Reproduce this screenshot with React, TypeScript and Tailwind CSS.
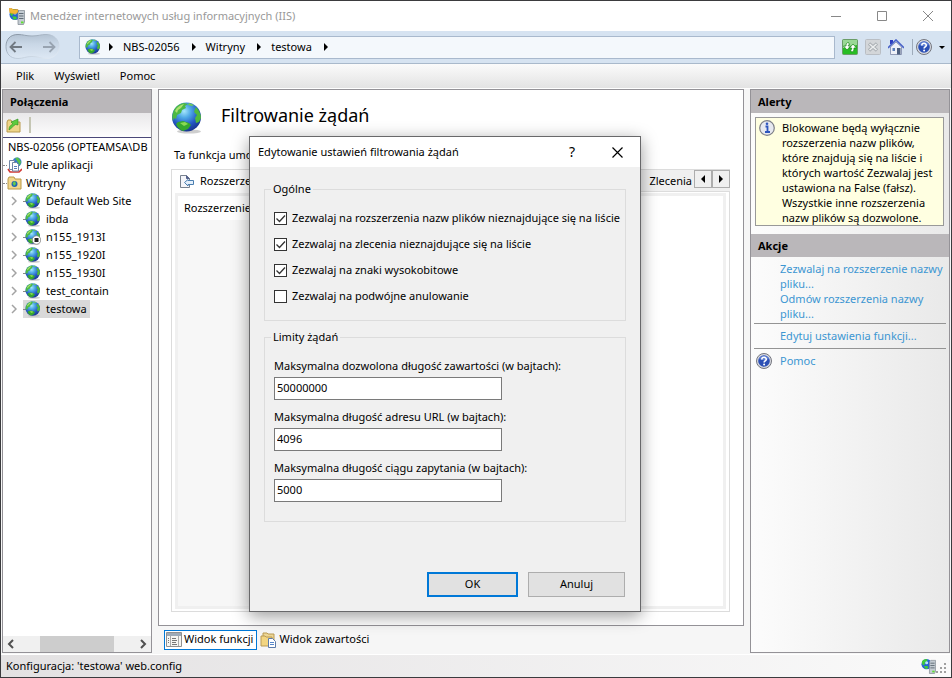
import React from 'react'

const sites = [
  { name: 'Default Web Site' },
  { name: 'ibda' },
  { name: 'n155_1913I', stopped: true },
  { name: 'n155_1920I' },
  { name: 'n155_1930I' },
  { name: 'test_contain' },
  { name: 'testowa', selected: true },
]

const options = [
  { id: 'ext', label: 'Zezwalaj na rozszerzenia nazw plików nieznajdujące się na liście', checked: true },
  { id: 'verbs', label: 'Zezwalaj na zlecenia nieznajdujące się na liście', checked: true },
  { id: 'highbit', label: 'Zezwalaj na znaki wysokobitowe', checked: true },
  { id: 'escape', label: 'Zezwalaj na podwójne anulowanie', checked: false },
]

const limits = [
  { id: 'content', label: 'Maksymalna dozwolona długość zawartości (w bajtach):', value: '50000000' },
  { id: 'url', label: 'Maksymalna długość adresu URL (w bajtach):', value: '4096' },
  { id: 'query', label: 'Maksymalna długość ciągu zapytania (w bajtach):', value: '5000' },
]

function Globe({ className, stopped = false }: { className: string; stopped?: boolean }) {
  const id = React.useId()
  return (
    <svg viewBox="0 0 32 32" className={className} aria-hidden="true">
      <defs>
        <radialGradient id={id} cx="0.42" cy="0.3" r="0.75">
          <stop offset="0" stopColor="#a6e6fb" />
          <stop offset="0.3" stopColor="#4fa9e6" />
          <stop offset="0.65" stopColor="#2558c4" />
          <stop offset="1" stopColor="#172f86" />
        </radialGradient>
      </defs>
      <ellipse cx="18" cy="29.5" rx="12" ry="2" fill="#b9b9b9" opacity="0.7" />
      <circle cx="15.5" cy="15" r="14.5" fill={`url(#${id})`} />
      <path d="M2 11C3 6 7 2 13 1l4 1-3 2 1 2-4 2-1 3-4 2-1 4-2-1-1 3c-1-2-1-6 0-8z" fill="#4cb944" />
      <path d="M4 9c2-4 5-6 9-7l-3 4-3 2-1 3z" fill="#c5ea7c" opacity="0.8" />
      <path d="M7 20l5-1 6 2 2 2-3 4-5 2c-3-1-6-4-7-7z" fill="#36a82d" />
      <path d="M9 21l5-1 3 2-4 2z" fill="#8bd952" />
      <path d="M25 5c3 3 5 7 5 11l-2 4-3 1-1-5 2-3-3-3 1-3z" fill="#4fb93c" />
      <path d="M18 1l5 2-2 1-4-1z" fill="#6fcb58" />
      {stopped && (
        <>
          <circle cx="23" cy="22" r="8.5" fill="#fff" stroke="#777" strokeWidth="1.5" />
          <rect x="19" y="18" width="8" height="8" fill="#222" />
        </>
      )}
    </svg>
  )
}

function ServerIcon({ className, folder = false }: { className: string; folder?: boolean }) {
  return (
    <svg viewBox="0 0 16 17" className={className} aria-hidden="true">
      <circle cx="6" cy="6.500" r="5.500" fill="#2462d6" />
      <path d="M1 5c0-3 3-4 5-4l1 2-3 2v2l-2 1zM3 8.500l4 0 1 2-3 1.500z" fill="#3fcb3a" />
      <circle cx="6" cy="5" r="1.600" fill="#b5e8fb" />
      {folder && <path d="M0 .5h3l1 1h5v3L6 6 1 5z" fill="#f5b832" stroke="#d08d14" strokeWidth="0.5" />}
      <path d="M9 4l1.500-1.500h5V14L14.500 16.500H9z" fill="#c3cbd2" stroke="#7b858e" strokeWidth="0.7" />
      <path d="M10 5.500h4.500M10 8h4.500M10 10.500h4.500" stroke="#55626c" strokeWidth="0.9" />
      <rect x="12" y="13.500" width="2.500" height="1.800" fill="#5ee02f" />
    </svg>
  )
}

function HelpIcon({ className }: { className: string }) {
  return (
    <svg viewBox="0 0 16 16" className={className} aria-hidden="true">
      <circle cx="8" cy="8" r="7.500" fill="#d9dbe2" stroke="#74767e" />
      <circle cx="8" cy="8" r="5.800" fill="#2c50b5" />
      <path d="M3 6a5.500 5.500 0 0 1 10 0c-3 1.500-7 1.500-10 0z" fill="#6f90df" opacity="0.7" />
      <path d="M5.800 6.400C5.800 3.600 10.300 3.700 10.300 6.200c0 1.700-2.200 1.600-2.200 3.300" fill="none" stroke="#fff" strokeWidth="1.600" />
      <circle cx="8.100" cy="11.600" r="1" fill="#fff" />
    </svg>
  )
}

function Triangle({ dir = 'right' }: { dir?: 'right' | 'left' | 'down' }) {
  const d = { right: 'M2 0l4 4-4 4z', left: 'M6 0L2 4l4 4z', down: 'M1 3h6L4 6z' }[dir]
  return (
    <svg viewBox="0 0 8 8" className="size-2" aria-hidden="true">
      <path d={d} fill="#000" />
    </svg>
  )
}

function TitleBar() {
  return (
    <header className="flex h-[30px] shrink-0 items-center bg-white pl-2 text-[#999]">
      <ServerIcon className="h-[17px] w-4" folder />
      <h1 className="ml-[5px] flex-1">Menedżer internetowych usług informacyjnych (IIS)</h1>
      <div className="flex">
        <button aria-label="Minimalizuj" className="flex h-[30px] w-[46px] items-center justify-center">
          <svg viewBox="0 0 10 10" className="size-2.5"><path d="M0 5.500h10" stroke="#888" /></svg>
        </button>
        <button aria-label="Maksymalizuj" className="flex h-[30px] w-[46px] items-center justify-center">
          <svg viewBox="0 0 10 10" className="size-2.5"><path d="M.5.5h9v9h-9z" fill="none" stroke="#888" /></svg>
        </button>
        <button aria-label="Zamknij" className="flex h-[30px] w-[46px] items-center justify-center">
          <svg viewBox="0 0 10 10" className="size-2.5"><path d="M0 0l10 10M10 0L0 10" stroke="#888" /></svg>
        </button>
      </div>
    </header>
  )
}

function AddressBar() {
  return (
    <nav className="flex h-[33px] shrink-0 items-center border-b border-[#a9b9cb] bg-[#d6e3f1] pl-1">
      <div className="relative flex h-7 w-[55px] items-center justify-between px-1">
        <svg viewBox="0 0 55 28" className="absolute inset-0 h-7 w-[55px]" aria-hidden="true">
          <defs>
            <linearGradient id="pill" x1="0" y1="0" x2="0" y2="1">
              <stop offset="0" stopColor="#b4c3d3" />
              <stop offset="0.4" stopColor="#c9d7e6" />
              <stop offset="1" stopColor="#dde8f4" />
            </linearGradient>
            <linearGradient id="pillEdge" x1="0" y1="0" x2="1" y2="1">
              <stop offset="0" stopColor="#7f8c9a" />
              <stop offset="0.5" stopColor="#b7c5d4" />
              <stop offset="1" stopColor="#e9f1f9" />
            </linearGradient>
          </defs>
          <path d="M13 1.500c5 0 8 1.500 14 1.500s9-1.500 14-1.500c8 0 13 5 13 12s-5 12-13 12c-5 0-8-2-14-2s-9 2-14 2c-8 0-12-5-12-12s4-12 12-12z" fill="url(#pill)" stroke="url(#pillEdge)" />
        </svg>
        <button aria-label="Wstecz" className="relative">
          <svg viewBox="0 0 13 12" className="h-3 w-[13px]"><path d="M13 6H2M6.500 1l-5 5 5 5" fill="none" stroke="#717982" strokeWidth="1.800" /></svg>
        </button>
        <button aria-label="Dalej" className="relative">
          <svg viewBox="0 0 13 12" className="h-3 w-[13px]"><path d="M0 6h11M6.500 1l5 5-5 5" fill="none" stroke="#98a3b0" strokeWidth="1.800" /></svg>
        </button>
      </div>
      <div className="ml-[19px] flex h-[23px] flex-1 items-center border border-[#a9b9cd] bg-[#f4f8fc] pl-[5px]">
        <Globe className="size-4" />
        <span className="ml-1.5"><Triangle /></span>
        {['NBS-02056', 'Witryny', 'testowa'].map((item) => (
          <React.Fragment key={item}>
            <a href="#" className="ml-2 mr-2.5">{item}</a>
            <Triangle />
          </React.Fragment>
        ))}
      </div>
      <div className="flex items-center pr-[5px] pl-[7px]">
        <button aria-label="Odśwież">
          <svg viewBox="0 0 16 16" className="size-4">
            <rect x=".5" y=".5" width="15" height="15" rx="1" fill="#27bd24" stroke="#6a9c68" />
            <path d="M1 1h14v5L1 9z" fill="#b6dfb2" opacity="0.800" />
            <path d="M6.500 3.500C4.500 3.500 4 5 4 7H1.500l3.500 4 3.500-4H6.300c0-1 .2-1.500 1.200-1.500zM9.500 13c2 0 2.500-1.500 2.500-4h2.500L11 5 7.500 9h2.200c0 1-.2 2-1.200 2z" fill="#fff" stroke="#168414" strokeWidth="0.700" />
          </svg>
        </button>
        <button aria-label="Zatrzymaj" className="ml-[7px]">
          <svg viewBox="0 0 16 16" className="size-4">
            <rect x=".5" y=".5" width="15" height="15" rx="1" fill="#d3d6d9" stroke="#b9bec4" />
            <path d="M4 4.500l8 7M12 4.500l-8 7" stroke="#a9aeb3" strokeWidth="3.400" />
            <path d="M4.500 5l7 6M11.500 5l-7 6" stroke="#eceeef" strokeWidth="1.600" />
          </svg>
        </button>
        <button aria-label="Strona główna" className="ml-[7px]">
          <svg viewBox="0 0 16 16" className="size-4">
            <path d="M2.500 8v7.500h11V8L8 3z" fill="#eef1f8" stroke="#7d88a8" strokeWidth="0.800" />
            <path d="M2 1h3v4H2z" fill="#2d3fc0" />
            <path d="M0 9l8-8 8 8" fill="none" stroke="#4a63c8" strokeWidth="1.600" />
            <rect x="4.500" y="9" width="2.500" height="3" fill="#5c7fb8" />
            <rect x="9" y="9" width="3.500" height="6.500" fill="#4d5f7f" />
          </svg>
        </button>
        <span className="ml-2 h-4 w-px bg-[#9eabba]" />
        <button aria-label="Pomoc" className="ml-[3px] flex items-center gap-1.5">
          <HelpIcon className="size-4" />
          <Triangle dir="down" />
        </button>
      </div>
    </nav>
  )
}

function Connections() {
  return (
    <aside className="flex w-[150px] shrink-0 flex-col border border-[#949297] bg-white">
      <h2 className="h-[23px] bg-[#bab7ba] pl-[7px] leading-[23px] font-bold">Połączenia</h2>
      <div className="flex h-[25px] items-center gap-2 border-b border-[#4a4878] bg-linear-to-b from-[#e9e8ea] to-[#fdfdfd] pl-[3px]">
        <button aria-label="Połącz">
          <svg viewBox="0 0 15 15" className="size-[15px]">
            <path d="M1 4l1-2h3l1 2h8v10H1z" fill="#eed589" stroke="#b99a4c" />
            <path d="M3 12c0-4 2-5 4-6L5 4l7-3v6L9.500 6.500C7 8 6 10 3 12z" fill="#5dcb3e" stroke="#2c8e1c" strokeWidth="0.600" />
          </svg>
        </button>
        <span className="h-4 w-0.5 bg-[#c5c6b4]" />
      </div>
      <ul className="flex-1 overflow-hidden whitespace-nowrap leading-[18px]">
        <li className="pl-[5px]">NBS-02056 (OPTEAMSA\DB</li>
        <li className="flex items-center">
          <span className="w-1 border-t border-dotted border-[#888]" />
          <svg viewBox="0 0 15 16" className="h-4 w-[15px]" aria-hidden="true">
            <circle cx="10" cy="5" r="4.500" fill="#3479cf" />
            <path d="M8 1l3-.5 3 4-1 4-2-3z" fill="#58c24a" />
            <path d="M1 12l2 3h9l3-3" fill="none" stroke="#d23a35" strokeWidth="1.600" />
            <path d="M2.500 3.500h5v9h-5z" fill="#fff" stroke="#7287a5" />
            <path d="M5.500 5.500h4l2 2v6.500h-6z" fill="#fff" stroke="#7287a5" />
            <path d="M7 9.500h3M7 11.500h3" stroke="#5b80bb" />
          </svg>
          <span className="ml-1">Pule aplikacji</span>
        </li>
        <li className="flex items-center">
          <span className="w-1 border-t border-dotted border-[#888]" />
          <svg viewBox="0 0 15 14" className="h-3.5 w-[15px]" aria-hidden="true">
            <path d="M1 3l1-2h5l1 2h6v10H1z" fill="#f1d68b" stroke="#b89848" />
            <circle cx="7.500" cy="8" r="3" fill="#1f67b5" />
            <path d="M5.500 7l2.500-2 1 3-2 2z" fill="#67cb4b" />
          </svg>
          <span className="ml-1">Witryny</span>
        </li>
        {sites.map((site) => (
          <li key={site.name} className="flex items-center pl-2">
            <svg viewBox="0 0 6 10" className="h-2.5 w-1.5" aria-hidden="true"><path d="M1 1l4 4-4 4" fill="none" stroke="#a3a3a3" strokeWidth="1.500" /></svg>
            <span className={`ml-1.5 flex items-center pr-[3px] ${site.selected ? 'bg-[#d9d9d9]' : ''}`}>
              <span className="w-0.5 border-t border-dotted border-[#888]" />
              <Globe className="size-4" stopped={site.stopped} />
              <a href="#" className="ml-[5px]">{site.name}</a>
            </span>
          </li>
        ))}
      </ul>
      <div className="flex h-4 items-center justify-between bg-[#f0f0f0] px-1">
        <button aria-label="Przewiń w lewo"><svg viewBox="0 0 7 10" className="h-2.5 w-[7px]"><path d="M6 1L2 5l4 4" fill="none" stroke="#505050" strokeWidth="2" /></svg></button>
        <div className="h-4 w-[74px] bg-[#cdcdcd]" />
        <button aria-label="Przewiń w prawo"><svg viewBox="0 0 7 10" className="h-2.5 w-[7px]"><path d="M1 1l4 4-4 4" fill="none" stroke="#505050" strokeWidth="2" /></svg></button>
      </div>
    </aside>
  )
}

function Workspace() {
  return (
    <div className="flex min-w-0 flex-1 flex-col">
      <main className="flex flex-1 flex-col border border-[#949297] bg-white pt-3 pr-[13px] pb-[13px] pl-3">
        <div className="flex items-center gap-[18px]">
          <Globe className="size-8" />
          <h2 className="pb-1.5 text-lg leading-[26px]">Filtrowanie żądań</h2>
        </div>
        <p className="mt-3 pl-[3px] leading-[18px]">Ta funkcja umo</p>
        <div className="mt-[5px] flex h-[23px] items-start whitespace-nowrap">
          <button className="flex h-[23px] items-center gap-1.5 border-t border-l border-[#dcdcdc] pr-2 pl-2">
            <svg viewBox="0 0 14 13" className="h-[13px] w-3.5" aria-hidden="true">
              <path d="M.5.5h6l3 3v9h-9z" fill="#f4f5f9" stroke="#77818f" />
              <path d="M6.500.5v3h3" fill="#53608a" stroke="#53608a" />
              <path d="M13.500 5.500v4H8V11L4.500 7.500 8 4.500v1z" fill="#e4effb" stroke="#4b7fb0" />
            </svg>
            Rozszerze
          </button>
          <div className="flex h-[23px] flex-1 items-start justify-end border-t border-b border-[#dcdcdc] bg-[#f0f0f0]">
            <button className="h-[22px] pr-0.5 leading-[22px]">Zlecenia</button>
            <button aria-label="Poprzednia karta" className="flex h-[18px] w-[18px] items-center justify-center border border-[#adadad] bg-[#f0f0f0]"><Triangle dir="left" /></button>
            <button aria-label="Następna karta" className="flex h-[18px] w-[18px] items-center justify-center border border-[#adadad] bg-[#f0f0f0]"><Triangle /></button>
          </div>
        </div>
        <div className="flex flex-1 border-x border-b border-[#dcdcdc] px-[3px] pt-px pb-0.5">
          <div className="flex flex-1 border-[3px] border-[#f0f0f0]">
            {/* sorted column is shaded below its header */}
            <table className="h-full w-1/4 border-collapse text-left">
              <thead>
                <tr><th className="h-6 px-1.5 font-normal">Rozszerzenie</th></tr>
              </thead>
              <tbody>
                <tr><td className="bg-[#f7f7f7]" /></tr>
              </tbody>
            </table>
          </div>
        </div>
      </main>
      <div className="flex h-[27px] items-center gap-[3px] pl-1.5">
        <button className="flex h-5 items-center gap-0.5 border border-[#0078d7] bg-white pr-[3px] pl-px">
          <svg viewBox="0 0 16 15" className="h-[15px] w-4" aria-hidden="true">
            <path d="M.5.5h15v14H.5z" fill="#f5f5f2" stroke="#909090" />
            <path d="M1 1h14v3H1z" fill="#9eabb8" />
            <path d="M4.500 4v10M12.500 4v10" stroke="#aaa" />
            <path d="M2 6.500h1M2 8.500h1M2 10.500h1M6 6.500h4M6 8.500h5M6 10.500h4M6 12.500h5" stroke="#777" />
          </svg>
          Widok funkcji
        </button>
        <button className="flex items-center gap-[3px]">
          <svg viewBox="0 0 16 16" className="size-4" aria-hidden="true">
            <path d="M3 1h4l1 1h6v9H3z" fill="#edd694" stroke="#b99a55" />
            <path d="M1 4h4l1 1h6v9H1z" fill="#f2d581" stroke="#b99a55" />
            <path d="M8.500 6.500h4l3 3v6h-7z" fill="#fff" stroke="#5d7baa" />
            <path d="M10 10.500h4M10 12.500h4" stroke="#5787ca" />
          </svg>
          Widok zawartości
        </button>
      </div>
    </div>
  )
}

function Actions() {
  return (
    <aside className="flex w-[200px] shrink-0 flex-col border border-[#949297] bg-linear-to-r from-[#fcfcfc] to-[#e9e9e9]">
      <h2 className="h-[23px] bg-[#bab7ba] pl-[7px] leading-[23px] font-bold">Alerty</h2>
      <div className="mx-1 mt-1 mr-[5px] flex items-start border border-[#999] bg-[#ffffe1] pt-0.5 pl-[3px]">
        <svg viewBox="0 0 16 16" className="size-4 shrink-0" aria-hidden="true">
          <circle cx="8" cy="8" r="7.300" fill="#e7e9f0" stroke="#7d7f87" strokeWidth="1.200" />
          <path d="M6.500 6.500h2v5M6 12h5" fill="none" stroke="#2d55bd" strokeWidth="1.800" />
          <circle cx="8" cy="3.700" r="1.300" fill="#2d55bd" />
        </svg>
        <p className="ml-[7px] leading-[15px]">
          Blokowane będą wyłącznie rozszerzenia nazw plików, które znajdują się na liście i których wartość Zezwalaj jest ustawiona na False (fałsz). Wszystkie inne rozszerzenia nazw plików są dozwolone.
        </p>
      </div>
      <h2 className="mt-2 h-[23px] bg-[#bab7ba] pl-[7px] leading-[23px] font-bold">Akcje</h2>
      <div className="flex flex-col pt-1 pl-[29px] leading-[15px] text-[#3c96d2]">
        <a href="#">Zezwalaj na rozszerzenie nazwy pliku...</a>
        <a href="#">Odmów rozszerzenia nazwy pliku...</a>
      </div>
      <hr className="mx-[3px] mt-0.5 border-[#949494]" />
      <a href="#" className="py-1 pl-[29px] leading-4 text-[#3c96d2]">Edytuj ustawienia funkcji...</a>
      <hr className="mx-[3px] border-[#949494]" />
      <a href="#" className="flex items-center gap-2 py-[3px] pl-[5px] leading-[18px] text-[#3c96d2]">
        <HelpIcon className="size-4" />
        Pomoc
      </a>
    </aside>
  )
}

function SettingsDialog() {
  return (
    <div role="dialog" aria-label="Edytowanie ustawień filtrowania żądań" className="absolute top-[135px] left-[248px] w-[392px] border border-[#68686a] bg-[#f0f0f0] shadow-[0_4px_16px_rgba(0,0,0,0.4)]">
      <div className="flex h-[30px] items-center bg-white pl-2">
        <h2 className="flex-1">Edytowanie ustawień filtrowania żądań</h2>
        <button aria-label="Pomoc" className="h-[30px] w-11 text-sm">?</button>
        <button aria-label="Zamknij" className="flex h-[30px] w-[46px] items-center justify-center">
          <svg viewBox="0 0 11 11" className="size-[11px]"><path d="M.5.5l10 10M10.500.5l-10 10" stroke="#000" strokeWidth="1.200" /></svg>
        </button>
      </div>
      <form className="px-3.5 pt-[13px] pb-3.5" onSubmit={(e) => e.preventDefault()}>
        <fieldset className="border border-[#dcdcdc] pb-[15px]">
          <legend className="ml-1.5 px-0.5 leading-[18px]">Ogólne</legend>
          <div className="flex flex-col gap-2 pt-[11px] pl-[9px]">
            {options.map((option) => (
              <label key={option.id} htmlFor={option.id} className="flex h-[18px] items-center gap-[5px] whitespace-nowrap">
                <span className="relative flex size-[13px] shrink-0">
                  <input id={option.id} type="checkbox" defaultChecked={option.checked} className="peer size-[13px] appearance-none border border-[#333] bg-white" />
                  <svg viewBox="0 0 13 13" className="pointer-events-none absolute inset-0 hidden size-[13px] peer-checked:block">
                    <path d="M2.500 6.500l3 3 5.500-6" fill="none" stroke="#333" strokeWidth="1.300" />
                  </svg>
                </span>
                {option.label}
              </label>
            ))}
          </div>
        </fieldset>
        <fieldset className="mt-[7px] border border-[#dcdcdc] pb-[19px]">
          <legend className="ml-1.5 px-0.5 leading-[18px]">Limity żądań</legend>
          <div className="flex flex-col gap-2 pt-[11px] pl-[9px]">
            {limits.map((limit) => (
              <div key={limit.id} className="flex flex-col gap-0.5">
                <label htmlFor={limit.id} className="leading-[18px]">{limit.label}</label>
                <input id={limit.id} type="text" defaultValue={limit.value} className="h-[23px] w-[228px] border border-[#7a7a7a] bg-white px-0.5 pb-0.5" />
              </div>
            ))}
          </div>
        </fieldset>
        <div className="mt-[50px] flex justify-end gap-2.5 pr-px">
          <button type="submit" className="h-[25px] w-[91px] border-2 border-[#0078d7] bg-[#e1e1e1]">OK</button>
          <button type="button" className="h-[25px] w-[97px] border border-[#adadad] bg-[#e1e1e1]">Anuluj</button>
        </div>
      </form>
    </div>
  )
}

export default function App() {
  return (
    <div className="relative flex min-h-screen flex-col border border-[#3b3b3e] bg-[#f6f6f6] font-['Noto_Sans',sans-serif] text-[11px] text-black">
      <TitleBar />
      <AddressBar />
      <div className="flex h-[25px] shrink-0 items-center gap-5 border-b border-white bg-linear-to-b from-[#fbfbfb] to-[#e3e3e3] pl-[15px]">
        <button>Plik</button>
        <button>Wyświetl</button>
        <button>Pomoc</button>
      </div>
      <div className="flex flex-1 gap-1.5 px-px pb-px">
        <Connections />
        <Workspace />
        <Actions />
      </div>
      <footer className="flex h-[23px] shrink-0 items-center justify-between border-t border-white bg-linear-to-r from-[#e3e1e2] to-[#fafafa] pr-1 pl-[5px]">
        <span>Konfiguracja: 'testowa' web.config</span>
        <span className="flex items-end">
          <ServerIcon className="h-4 w-[15px]" />
          <svg viewBox="0 0 11 11" className="size-[11px]" aria-hidden="true">
            <path d="M8 0h2v2H8zM4 4h2v2H4zM8 4h2v2H8zM0 8h2v2H0zM4 8h2v2H4zM8 8h2v2H8z" fill="#a0a0a0" />
          </svg>
        </span>
      </footer>
      <SettingsDialog />
    </div>
  )
}
